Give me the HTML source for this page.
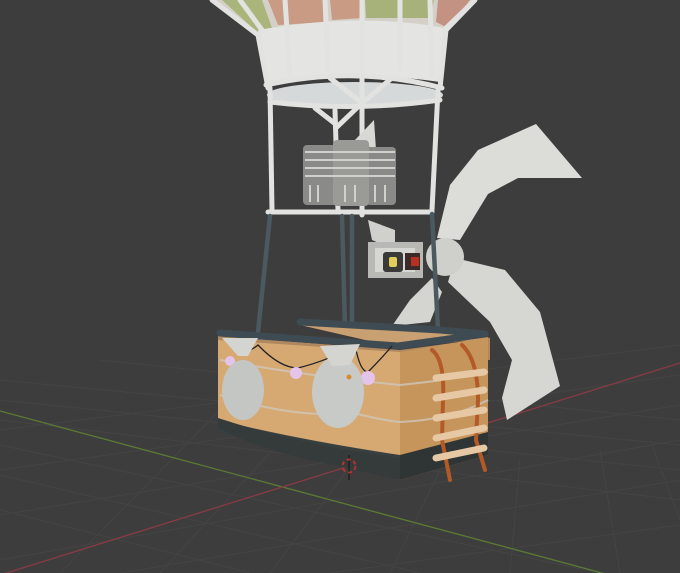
<!DOCTYPE html>
<html><head><style>html,body{margin:0;padding:0;background:#3d3d3d;overflow:hidden}svg{display:block}</style></head>
<body>
<svg width="680" height="573" viewBox="0 0 680 573" xmlns="http://www.w3.org/2000/svg">
<rect width="680" height="573" fill="#3d3d3d"/>
<g stroke="#454545" stroke-width="1" fill="none" opacity="0.9">
<path d="M0 430 L680 345 M0 470 L680 375 M0 515 L680 405 M0 560 L680 440 M120 573 L680 480 M330 573 L680 525"/>
<path d="M0 400 L680 470 M0 420 L680 500 M0 445 L600 573 M0 475 L420 573 M0 510 L250 573 M0 380 L680 445 M100 360 L680 420"/>
<path d="M60 573 L230 400 M160 573 L300 420 M270 573 L370 440 M390 573 L440 470 M510 573 L520 460 M620 573 L600 450 M680 520 L650 440"/>
</g>
<path d="M0 411 L680 594" stroke="#5c7a34" stroke-width="1.3"/>
<path d="M0 575 L680 363" stroke="#8a3a44" stroke-width="1.3"/>
<!-- envelope -->
<path d="M210 0 L476 0 L448 30 L262 34 Z" fill="#d4d0c8"/>
<path d="M222 0 L262 0 L272 28 L258 33 Z" fill="#a9b57a"/>
<path d="M268 0 L325 0 L328 22 L278 25 Z" fill="#c99a84"/>
<path d="M330 0 L362 0 L362 18 L332 20 Z" fill="#c99a84"/>
<path d="M365 0 L434 0 L430 18 L366 18 Z" fill="#a7b27a"/>
<path d="M438 0 L470 0 L448 28 L436 22 Z" fill="#c39282"/>
<path d="M258 30 Q360 12 445 28 L440 82 Q360 70 268 84 Z" fill="#e4e4e2"/>
<ellipse cx="355" cy="95" rx="88" ry="13" fill="#d5d9d9"/>
<g stroke="#e2e2e0" stroke-width="5" fill="none" stroke-linecap="round">
<path d="M212 0 L258 35 L268 88"/><path d="M475 0 L446 30 L440 88"/>
<path d="M240 0 L262 30 M285 0 L290 75 M325 0 L328 70 M362 0 L362 70 M400 0 L400 70 M430 0 L432 75 M470 5 L446 28"/>
<path d="M266 85 Q355 65 442 88"/><path d="M270 102 Q355 112 440 100"/>
<path d="M330 78 L362 103 L392 78 M315 108 L338 126 L362 103"/>
<path d="M270 88 L272 210 M438 90 L432 210 M362 75 L362 215 M335 110 L338 210"/>
<path d="M268 212 L432 212"/>
</g>
<!-- back blade pieces -->
<path d="M355 140 L374 120 L376 150 Z" fill="#d8d8d4"/>
<!-- burners -->
<g>
<rect x="303" y="145" width="36" height="60" rx="4" fill="#8a8a88"/>
<rect x="366" y="147" width="30" height="58" rx="4" fill="#8a8a88"/>
<rect x="333" y="140" width="36" height="66" rx="4" fill="#9a9a96"/>
<g stroke="#d0d0cc" stroke-width="2"><path d="M305 152 H395 M305 160 H395 M305 168 H395 M305 176 H395 M310 185 V202 M318 185 V202 M345 185 V202 M355 185 V202 M375 185 V202 M385 185 V202"/></g>
</g>
<!-- propeller -->
<path d="M437 238 L450 185 L478 150 L536 124 L582 178 L518 178 L488 194 L460 240 Z" fill="#dcdcd8"/>
<path d="M455 258 L505 270 L540 312 L560 386 L507 420 L502 398 L512 360 L490 322 L448 282 Z" fill="#d6d6d2"/>
<path d="M392 326 L410 300 L432 278 L442 292 L430 322 Z" fill="#d4d4d0"/>
<path d="M368 220 L395 230 L395 250 L372 240 Z" fill="#d0d0cc"/>
<circle cx="445" cy="257" r="19" fill="#cfcfcb"/>
<rect x="368" y="242" width="55" height="36" fill="#b8b8b4"/>
<rect x="375" y="248" width="40" height="24" fill="#d6d6d2"/>
<rect x="383" y="252" width="20" height="20" rx="3" fill="#3a3a38"/>
<rect x="389" y="257" width="8" height="10" rx="2" fill="#e2cc5a"/>
<rect x="405" y="253" width="15" height="17" fill="#3a2a28"/>
<rect x="411" y="257" width="8" height="9" fill="#b83020"/>
<!-- dark rods -->
<g stroke="#4a5a60" stroke-width="4.5" stroke-linecap="round">
<path d="M270 216 L258 332 M352 216 L352 332 M432 214 L438 330 M342 216 L345 328"/>
</g>
<!-- basket -->
<path d="M218 336 L400 350 L490 338 L490 360 L218 345 Z" fill="#b08860"/>
<path d="M300 325 L445 330 L490 338 L400 348 Z" fill="#c9a071"/>
<path d="M218 340 L400 352 L400 480 L218 430 Z" fill="#d6a872"/>
<path d="M400 352 L488 337 L488 455 L400 480 Z" fill="#c6955c"/>
<path d="M218 420 Q300 440 400 455 L400 480 L218 432 Z" fill="#38403f"/>
<path d="M218 428 Q260 450 320 462 L400 480 L400 458 Q300 445 218 418 Z" fill="#353b3b"/>
<path d="M400 455 L488 432 L488 455 L400 480 Z" fill="#2f3535"/>
<path d="M218 455 L218 430 L400 480" fill="none"/>
<g stroke="#cfc8bc" stroke-width="2" fill="none" opacity="0.8"><path d="M220 360 Q300 375 400 385 Q450 380 488 372"/><path d="M220 395 Q300 420 350 412 Q380 420 400 422 Q450 420 488 400"/></g>
<!-- rim -->
<g stroke="#3e4b52" stroke-width="7" fill="none" stroke-linecap="round" stroke-linejoin="round">
<path d="M220 333 L398 346 L485 334"/><path d="M300 322 L440 330 L485 334"/>
</g>
<!-- lights string -->
<path d="M225 340 Q240 360 258 345 Q280 368 298 368 Q330 360 355 345 Q360 372 368 372 Q380 360 392 346" stroke="#222" stroke-width="1.3" fill="none"/>
<circle cx="296" cy="373" r="6" fill="#e4c4ea"/><circle cx="368" cy="378" r="7" fill="#e4c4ea"/><circle cx="230" cy="361" r="5" fill="#e4c4ea"/>
<!-- bags -->
<ellipse cx="243" cy="390" rx="21" ry="30" fill="#c4c6c4"/>
<path d="M222 338 L258 338 L248 356 L238 356 Z" fill="#d4d4d0"/>
<ellipse cx="338" cy="392" rx="26" ry="36" fill="#c8cac8"/>
<path d="M320 346 L360 344 L350 365 L332 366 Z" fill="#d4d4d0"/>
<circle cx="349" cy="377" r="2.5" fill="#d88a30"/>
<!-- ladder -->
<g stroke="#b35a28" stroke-width="4" fill="none" stroke-linecap="round"><path d="M432 350 Q445 360 443 400 L442 440 L450 480"/><path d="M462 345 Q478 360 478 400 L476 440 L485 470"/></g>
<g stroke="#e6c8a4" stroke-width="7" stroke-linecap="round"><path d="M436 378 L484 372 M436 398 L484 390 M436 418 L484 410 M436 438 L484 428 M436 458 L484 448"/></g>
<!-- origin marker -->
<path d="M349 455 V480" stroke="#111" stroke-width="1"/>
<circle cx="349" cy="466" r="6.5" fill="none" stroke="#b83030" stroke-width="2" stroke-dasharray="4 3"/>
</svg>
</body></html>
